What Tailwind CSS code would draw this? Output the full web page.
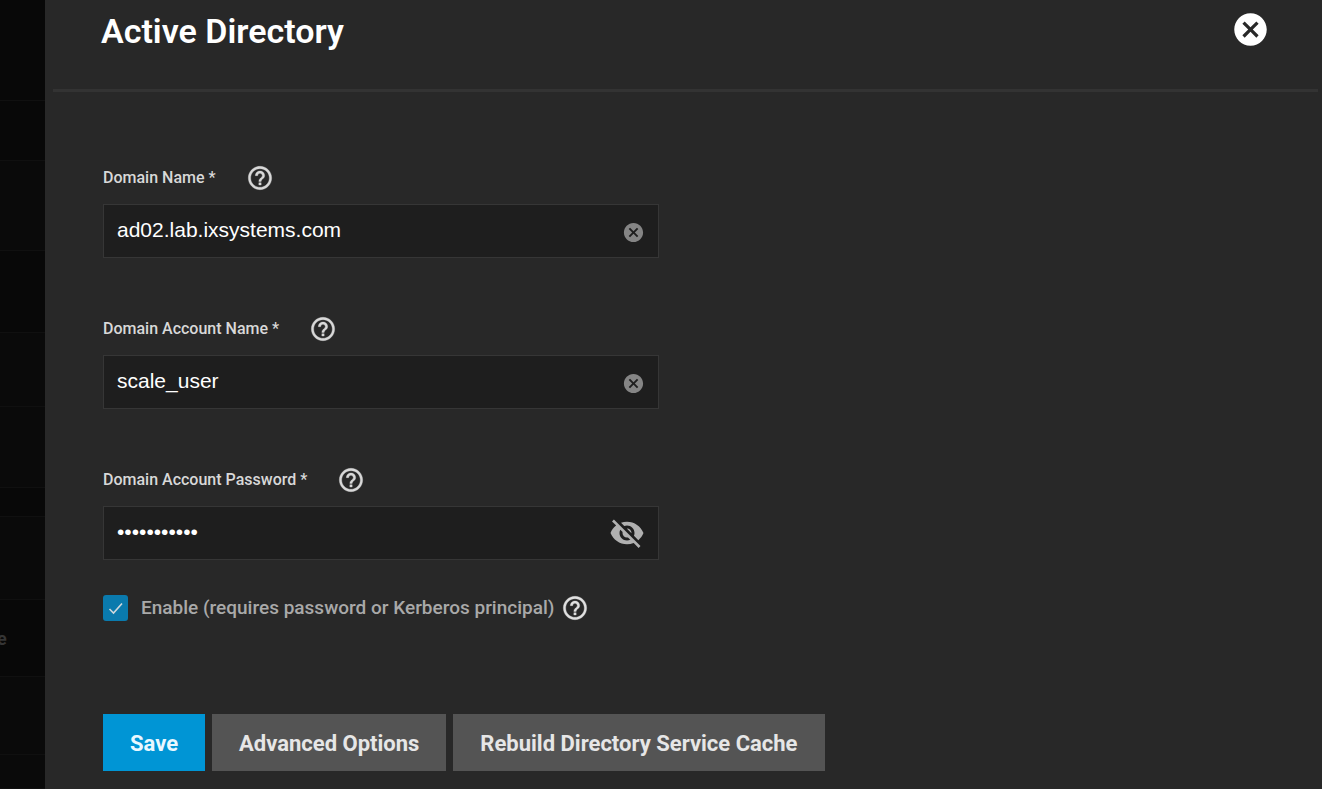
<!DOCTYPE html>
<html lang="en">
<head>
<meta charset="utf-8">
<meta name="viewport" content="width=device-width, initial-scale=1">
<title>Active Directory</title>
<script src="https://cdn.jsdelivr.net/npm/@tailwindcss/browser@4"></script>
</head>
<body class="flex min-h-screen bg-[#080808] font-['Roboto',sans-serif]">
<svg class="hidden" aria-hidden="true">
  <symbol id="help" viewBox="0 0 24 24"><path d="M11 18h2v-2h-2v2zm1-16C6.480 2 2 6.480 2 12s4.480 10 10 10 10-4.480 10-10S17.520 2 12 2zm0 18c-4.410 0-8-3.590-8-8s3.590-8 8-8 8 3.590 8 8-3.590 8-8 8zm0-14c-2.210 0-4 1.790-4 4h2c0-1.100.9-2 2-2s2 .9 2 2c0 2-3 1.750-3 5h2c0-2.250 3-2.500 3-5 0-2.210-1.790-4-4-4z" stroke="currentColor" stroke-width=".3"/></symbol>
  <symbol id="cancel" viewBox="0 0 24 24"><path d="M12 2C6.470 2 2 6.470 2 12s4.470 10 10 10 10-4.470 10-10S17.530 2 12 2zm5 13.590L15.590 17 12 13.410 8.410 17 7 15.590 10.590 12 7 8.410 8.410 7 12 10.590 15.590 7 17 8.410 13.410 12 17 15.590z"/></symbol>
  <symbol id="eye-off" viewBox="0 0 24 24"><path d="M12 7c2.760 0 5 2.240 5 5 0 .65-.13 1.260-.36 1.830l2.920 2.920c1.510-1.260 2.700-2.890 3.430-4.750-1.730-4.390-6-7.500-11-7.500-1.400 0-2.740.25-3.980.7l2.160 2.160C10.740 7.130 11.350 7 12 7zM2 4.270l2.280 2.280.46.46C3.080 8.300 1.780 10.020 1 12c1.730 4.390 6 7.500 11 7.500 1.550 0 3.030-.3 4.380-.84l.42.42L19.730 22 21 20.730 3.270 3 2 4.270zM7.530 9.800l1.550 1.550c-.05.21-.08.43-.08.65 0 1.660 1.340 3 3 3 .22 0 .44-.03.65-.08l1.550 1.550c-.67.33-1.410.53-2.200.53-2.760 0-5-2.240-5-5 0-.79.2-1.530.53-2.200zm4.310-.78l3.150 3.150.02-.16c0-1.660-1.340-3-3-3l-.17.01z"/></symbol>
</svg>

<aside class="flex w-[45px] shrink-0 flex-col overflow-hidden text-[#353535] *:border-b *:border-[#101010]">
  <div class="h-[101px]"></div>
  <div class="h-[60px]"></div>
  <div class="h-[90px] bg-[#0a0a0a]"></div>
  <div class="h-[82px]"></div>
  <div class="h-[74px] bg-[#0a0a0a]"></div>
  <div class="h-[81px] bg-[#0a0a0a]"></div>
  <div class="h-[29px]"></div>
  <div class="h-[83px] bg-[#0a0a0a]"></div>
  <div class="flex h-[77px] items-center justify-start pt-0.5 text-lg font-bold"><span class="-ml-[3px]">e</span></div>
  <div class="h-[78px] bg-[#0a0a0a]"></div>
  <div class="grow bg-[#0a0a0a]"></div>
</aside>

<main class="grow bg-[#282828] pb-4">
  <header class="mr-1 ml-2 flex h-[92px] items-start justify-between border-b-[3px] border-[#333333] pt-[10px] pr-12 pl-12">
    <h1 class="text-[34px] leading-[42px] font-semibold text-white">Active Directory</h1>
    <button type="button" aria-label="Close" class="text-white"><svg class="size-[39px] fill-current"><use href="#cancel"/></svg></button>
  </header>

  <form class="px-[58px] pt-[72px]">
    <div class="flex max-w-[556px] flex-col gap-[57px]">
      <div class="flex flex-col gap-3">
        <div class="flex h-7 items-center gap-[30px] text-[#d8d8d8]">
          <label for="domain" class="text-base font-medium">Domain Name *</label>
          <button type="button" aria-label="Help for domain name"><svg class="size-7 fill-current"><use href="#help"/></svg></button>
        </div>
        <div class="flex h-[54px] items-center border border-[#363636] bg-[#1e1e1e] pr-[13px] pl-[13px]">
          <input id="domain" type="text" value="ad02.lab.ixsystems.com" class="min-w-0 grow bg-transparent pb-0.5 font-['Liberation_Sans',sans-serif] text-[21px] leading-7 text-white outline-none">
          <button type="button" aria-label="Clear domain name" class="pt-0.5 text-[#858585]"><svg class="size-[23px] fill-current"><use href="#cancel"/></svg></button>
        </div>
      </div>
      <div class="flex flex-col gap-3">
        <div class="flex h-7 items-center gap-[30px] text-[#d8d8d8]">
          <label for="account" class="text-base font-medium">Domain Account Name *</label>
          <button type="button" aria-label="Help for account name"><svg class="size-7 fill-current"><use href="#help"/></svg></button>
        </div>
        <div class="flex h-[54px] items-center border border-[#363636] bg-[#1e1e1e] pr-[13px] pl-[13px]">
          <input id="account" type="text" value="scale_user" class="min-w-0 grow bg-transparent pb-0.5 font-['Liberation_Sans',sans-serif] text-[21px] leading-7 text-white outline-none">
          <button type="button" aria-label="Clear account name" class="pt-0.5 text-[#858585]"><svg class="size-[23px] fill-current"><use href="#cancel"/></svg></button>
        </div>
      </div>
      <div class="flex flex-col gap-3">
        <div class="flex h-7 items-center gap-[30px] text-[#d8d8d8]">
          <label for="password" class="text-base font-medium">Domain Account Password *</label>
          <button type="button" aria-label="Help for password"><svg class="size-7 fill-current"><use href="#help"/></svg></button>
        </div>
        <div class="flex h-[54px] items-center border border-[#363636] bg-[#1e1e1e] pr-[13px] pl-[13px]">
          <input id="password" type="password" value="directory01" class="min-w-0 grow bg-transparent pb-0.5 font-['Liberation_Sans',sans-serif] text-[21px] leading-7 text-white outline-none">
          <button type="button" aria-label="Show password" class="text-[#b0b0b0]"><svg class="size-9 fill-current"><use href="#eye-off"/></svg></button>
        </div>
      </div>
    </div>

    <div class="mt-[34px] flex h-7 items-center">
      <span class="grid">
        <input id="enable" type="checkbox" checked class="col-start-1 row-start-1 h-[26px] w-[25px] appearance-none rounded-[3px] bg-[#0a7aad]">
        <svg class="pointer-events-none col-start-1 row-start-1 h-[26px] w-[25px] fill-none stroke-[#d0d8dc]" stroke-width="1.6" viewBox="0 0 25 26"><path d="M6.500 14l4 4L19 8.500"/></svg>
      </span>
      <label for="enable" class="ml-[13px] text-[19px] font-medium text-[#a9a9a9]">Enable (requires password or Kerberos principal)</label>
      <button type="button" aria-label="Help for enable" class="ml-[7px] text-[#e0e0e0]"><svg class="size-7 fill-current"><use href="#help"/></svg></button>
    </div>

    <div class="mt-[92px] flex flex-wrap gap-[7px] text-[22px] font-bold text-[#e6e6e6] *:h-[57px] *:px-[27px] *:pt-0.5">
      <button type="submit" class="bg-[#0095d5] text-[#eaf8ff]">Save</button>
      <button type="button" class="bg-[#545454]">Advanced Options</button>
      <button type="button" class="bg-[#545454]">Rebuild Directory Service Cache</button>
    </div>
  </form>
</main>
</body>
</html>
